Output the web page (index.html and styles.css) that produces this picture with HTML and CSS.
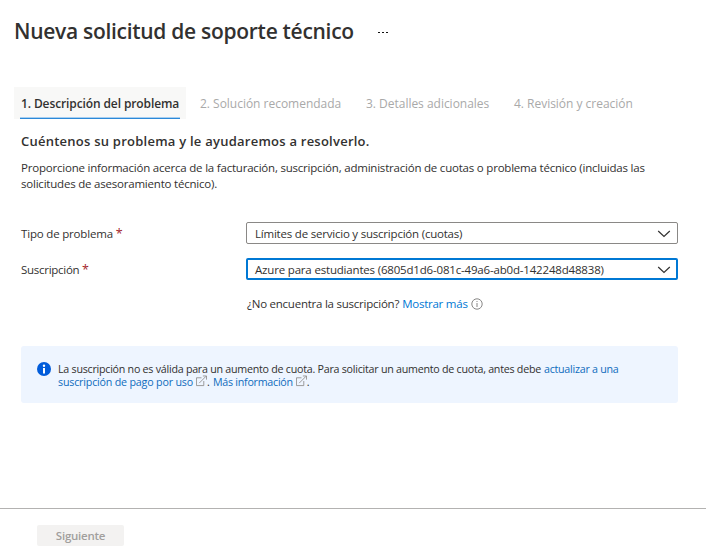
FILE: index.html
```html
<!DOCTYPE html>
<html lang="es">
<head>
<meta charset="utf-8">
<title>Nueva solicitud de soporte técnico</title>
<link rel="stylesheet" href="styles.css">
</head>
<body>
<header class="header">
  <h1 class="title">Nueva solicitud de soporte técnico</h1>
  <button class="more" aria-label="Más"><i></i><i></i><i></i></button>
</header>
<main class="content">
  <nav class="tabs">
    <a class="tab tab-active"><span class="t1">1. Descripción del problema</span></a>
    <a class="tab t2">2. Solución recomendada</a>
    <a class="tab t3">3. Detalles adicionales</a>
    <a class="tab t4">4. Revisión y creación</a>
  </nav>
  <h2 class="subtitle">Cuéntenos su problema y le ayudaremos a resolverlo.</h2>
  <p class="intro">Proporcione información acerca de la facturación, suscripción, administración de cuotas o problema técnico (incluidas las<br>solicitudes de asesoramiento técnico).</p>
  <div class="field">
    <label class="label"><span class="l1">Tipo de problema</span> <b class="req">*</b></label>
    <div class="select"><span class="s1">Límites de servicio y suscripción (cuotas)</span>
      <svg class="chevron" width="14" height="8" viewBox="0 0 14 8"><path d="M1.200 1l5.800 5.500L12.800 1"/></svg>
    </div>
  </div>
  <div class="field">
    <label class="label"><span class="l2">Suscripción</span> <b class="req">*</b></label>
    <div class="select select-focus"><span class="s2">Azure para estudiantes (6805d1d6-081c-49a6-ab0d-142248d48838)</span>
      <svg class="chevron" width="14" height="8" viewBox="0 0 14 8"><path d="M1.200 1l5.800 5.500L12.800 1"/></svg>
    </div>
  </div>
  <div class="hint"><span class="h1">¿No encuentra la suscripción?</span><a class="link h2">Mostrar más</a>
    <svg class="hint-icon" width="12" height="12" viewBox="0 0 12 12"><circle cx="6" cy="6" r="5.200"/><path d="M6 5v4M6 3v1"/></svg>
  </div>
  <section class="notice">
    <svg class="notice-icon" width="14" height="14" viewBox="0 0 14 14"><circle cx="7" cy="7" r="7" fill="#015cda"/><path d="M6 6h2v5.500H6z" fill="#fff"/><circle cx="7" cy="3.700" r="1.200" fill="#fff"/></svg>
    <div class="notice-text">
      <div class="line"><span class="n1">La suscripción no es válida para un aumento de cuota. Para solicitar un aumento de cuota, antes debe</span><a class="nlink n2">actualizar a una</a></div>
      <div class="line"><a class="nlink n3">suscripción de pago por uso</a><svg class="ext" width="12" height="12" viewBox="0 0 12 12"><path d="M6 2.500H.5v8.500h8V6M3.500 8.300L11 .8M7.500.5h4v4"/></svg><span class="dot">.</span><a class="nlink n4">Más información</a><svg class="ext" width="12" height="12" viewBox="0 0 12 12"><path d="M6 2.500H.5v8.500h8V6M3.500 8.300L11 .8M7.500.5h4v4"/></svg><span class="dot">.</span></div>
    </div>
  </section>
</main>
<footer class="footer"><button class="next" disabled>Siguiente</button></footer>
</body>
</html>
```
FILE: styles.css
```css
* { box-sizing: border-box; }
body {
  margin: 0;
  height: 557px;
  display: flex;
  flex-direction: column;
  overflow: hidden;
  background: #fff;
  color: #323130;
  font: 11.5px/16px "Open Sans", "Noto Sans", sans-serif;
  letter-spacing: -0.21px;
  white-space: nowrap;
}
svg { flex: none; }
.header { display: flex; height: 87px; padding: 17px 0 0 14px; }
.title { margin: 0; width: 364px; font-size: 21px; line-height: 28px; font-weight: 600; letter-spacing: -0.29px; }
.more { display: flex; gap: 3px; height: 1px; margin: 15px 0 0; padding: 0; border: 0; background: none; }
.more i { width: 1.5px; height: 1px; margin-right: -0.5px; background: #111; }
.content { flex: 1; padding: 0 28px 0 21px; }
.tabs { display: flex; height: 32px; margin-left: -7px; color: #a9a9a9; font-size: 12px; line-height: 34px; letter-spacing: -0.02px; }
.tab { width: 148px; }
.tab-active { width: 172px; margin-right: 14px; padding: 0 6px; background: #f8f8f7; color: #323130; font-weight: 600; letter-spacing: -0.11px; }
.tab-active span { display: block; height: 32px; padding-left: 1px; border-bottom: 1px solid #2b88d8; box-shadow: inset 0 -1px #a8cff0; }
.t2 { width: 166px; }
.subtitle { margin: 13px 0 0; font-size: 13px; line-height: 18px; font-weight: 600; letter-spacing: 0.24px; }
.intro { margin: 10px 0 0; }
.field { display: flex; align-items: center; height: 22px; margin-top: 14px; }
.intro + .field { margin-top: 30px; }
.label { width: 225px; padding-top: 2px; }
.l1 { letter-spacing: -0.18px; }
.l2 { letter-spacing: -0.28px; }
.req { color: #a4262c; font-weight: 400; font-size: 12.5px; line-height: 12px; }
.select { flex: 1; display: flex; align-items: center; justify-content: space-between; height: 22px; padding: 0 6px 0 8px; border: 1px solid #8a8886; border-radius: 2px; }
.select-focus { border: 2px solid #0078d4; padding: 0 5px 0 7px; }
.select span { padding-top: 2px; }
.s2 { letter-spacing: -0.18px; }
.chevron { margin-top: 1px; fill: none; stroke: #323130; stroke-width: 1.2; }
.link { color: #0078d4; }
.hint { display: flex; align-items: center; height: 16px; margin: 16px 0 0 226px; }
.h1 { letter-spacing: -0.24px; }
.h2 { margin: 0 3px 0 3px; letter-spacing: -0.24px; }
.hint-icon { margin-top: -1px; fill: none; stroke: #7a7978; stroke-width: 0.9; }
.notice { display: flex; height: 57px; margin-top: 34px; padding: 16px; border-radius: 3px; background: #eef5ff; font-size: 10.7px; line-height: 13px; letter-spacing: -0.25px; }
.notice-icon { margin-right: 7px; }
.notice-text { padding-top: 1px; }
.line { display: flex; height: 13px; }
.nlink { color: #0f6cbd; }
.n2 { margin-left: 3px; }
.n3 { letter-spacing: -0.19px; }
.ext { width: 11px; margin: -1px 0 0 3px; fill: none; stroke: #8a8886; stroke-width: 0.9; }
.dot { width: 6px; }
.footer { height: 49px; border-top: 1px solid #b3b2b1; padding: 16px 0 0 37px; }
.next { display: block; width: 87px; height: 21px; padding: 0; border: 0; border-radius: 2px; background: #f3f2f1; color: #a19f9d; font: 600 11.5px/22px "Open Sans", sans-serif; letter-spacing: -0.25px; }
```
